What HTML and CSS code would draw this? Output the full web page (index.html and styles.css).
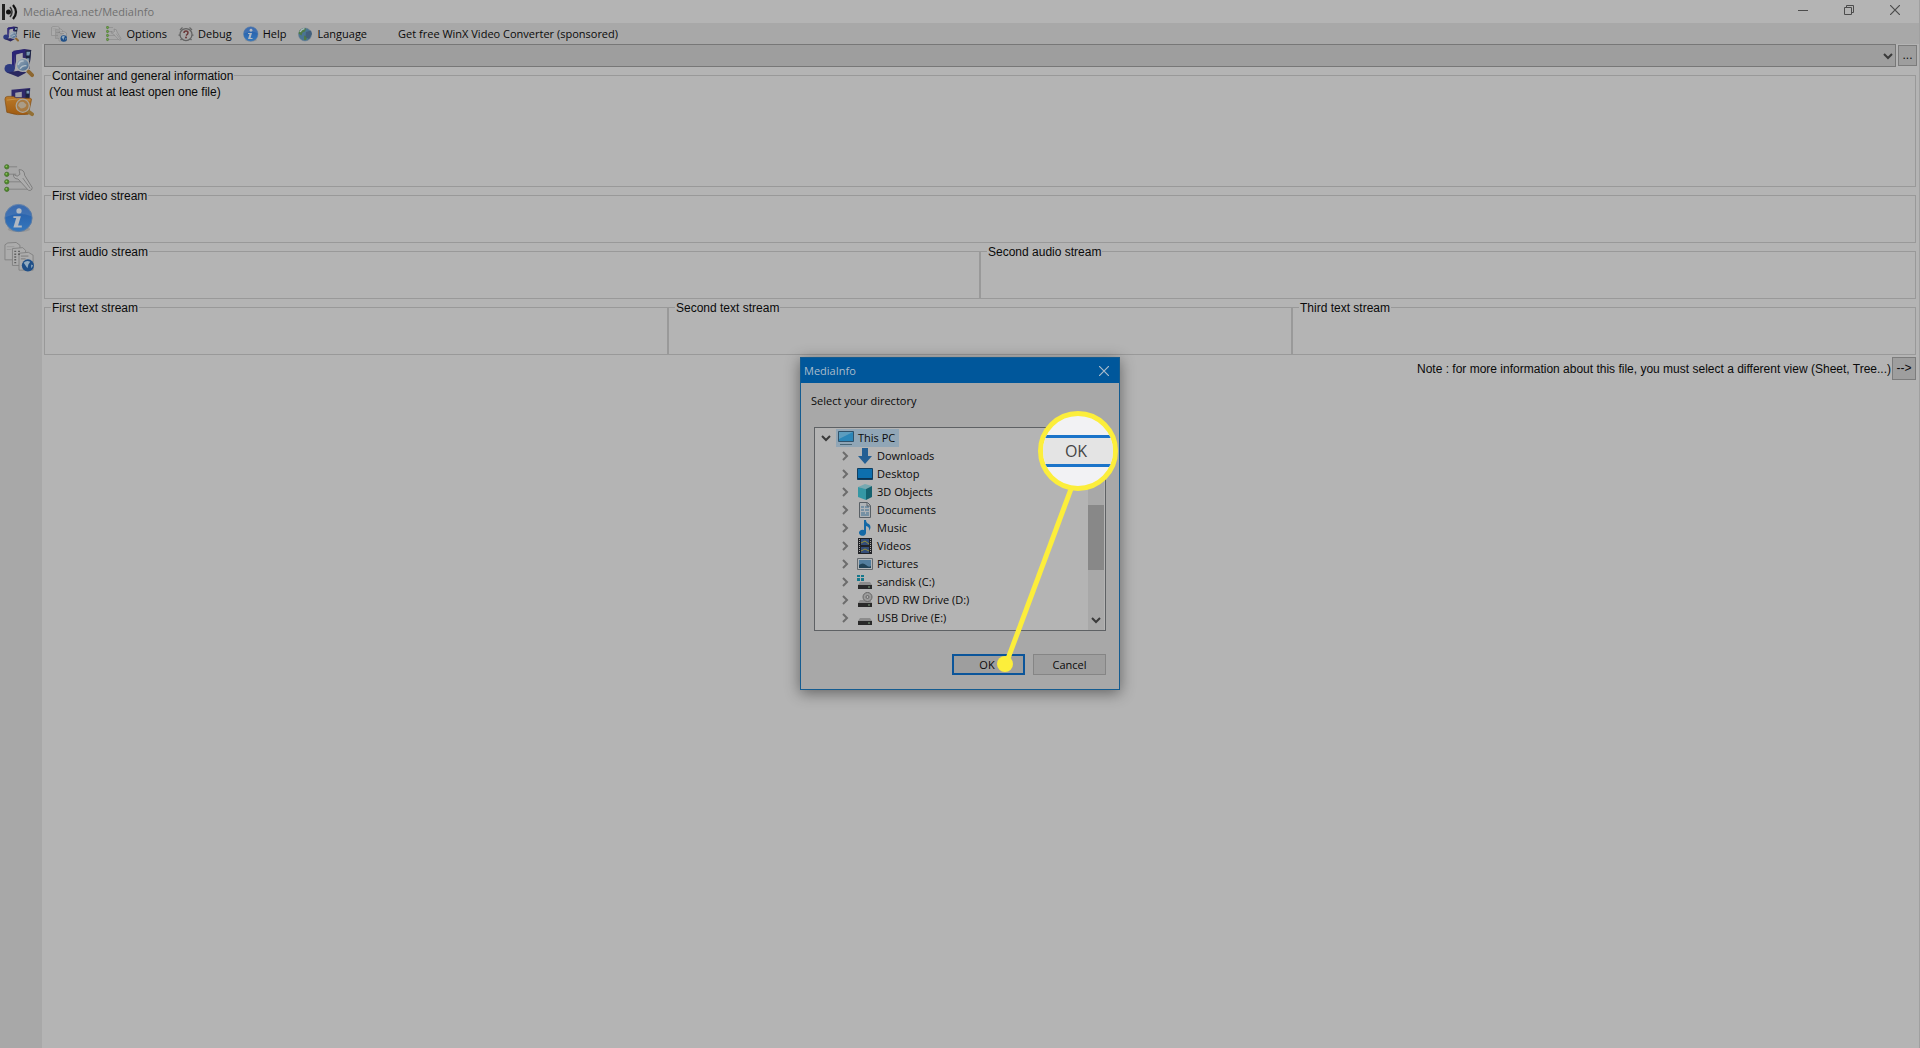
FILE: index.html
```html
<!DOCTYPE html>
<html lang="en">
<head>
<meta charset="utf-8">
<title>MediaArea.net/MediaInfo</title>
<link rel="stylesheet" href="styles.css">
</head>
<body>
<svg class="defs" aria-hidden="true">
  <defs>
    <linearGradient id="glass" x1="0" y1="0" x2="1" y2="1"><stop offset="0" stop-color="#a3b0bb"/><stop offset="1" stop-color="#3f648c"/></linearGradient>
    <linearGradient id="blue" x1="0" y1="0" x2="0" y2="1"><stop offset="0" stop-color="#2459a6"/><stop offset="1" stop-color="#3578bd"/></linearGradient>
    <linearGradient id="orange" x1="0" y1="0" x2="0" y2="1"><stop offset="0" stop-color="#b97a2a"/><stop offset="1" stop-color="#a15c12"/></linearGradient>
    <symbol id="chev" viewBox="0 0 8 10"><path d="M2 1l4 4-4 4" fill="none" stroke="#6c6c6c" stroke-width="2"/></symbol>
    <symbol id="down" viewBox="0 0 10 8"><path d="M1 2l4 4 4-4" fill="none" stroke="#3a3a3a" stroke-width="2"/></symbol>
    <symbol id="cross" viewBox="0 0 10 10"><path d="M0 0l10 10M10 0L0 10" fill="none" stroke="currentColor" stroke-width="1.2"/></symbol>
    <symbol id="file" viewBox="0 0 32 32">
      <path d="M10 3l12-2 7 1-2 20-10 5V7l-4 1v14z" fill="#302a6b"/>
      <path d="M13 7l7-2v17l-7 3z" fill="#a9a9ad"/>
      <path d="M23 3l6-1-2 20-3 1z" fill="#1d2440"/><path d="M24 4h4l-1 4h-3zM24 11h3v3h-3z" fill="#7796b0"/>
      <path d="M10 4v18M10 5l12-2" stroke="#2b2477" stroke-width="3"/>
      <ellipse cx="6" cy="22" rx="5.500" ry="5" fill="#2d3a80"/><path d="M3 26l12 5 9-5-7-2z" fill="#2a2860"/>
      <path d="M26 25l4 4" stroke="#8d6730" stroke-width="4" stroke-linecap="round"/>
      <circle cx="20" cy="18" r="7" fill="url(#glass)" stroke="#adadad" stroke-width="1.400"/>
      <path d="M15 18q2-5 6-4M17 22q3-4 7-3" stroke="#b4c0ca" stroke-width="1.500" fill="none"/>
    </symbol>
    <symbol id="folder" viewBox="0 0 32 32">
      <path d="M8 3l20-2-1 14H8z" fill="#302a6b"/><path d="M12 6l7-1v6h-7z" fill="#a1a1a6"/><path d="M23 3l4-1v12h-4z" fill="#1b2340"/><path d="M24 4h3v3h-3z" fill="#7796b0"/>
      <path d="M1 13q0-3 3-3h6l3 2h15q2 0 1 3l-3 14q-12 2-23-2z" fill="url(#orange)" stroke="#7e4b12" stroke-width=".7"/>
      <path d="M3 14q13-3 25 0" stroke="#c6934a" fill="none"/>
      <path d="M26 26l4 3" stroke="#937035" stroke-width="4" stroke-linecap="round"/>
      <circle cx="20" cy="20" r="7" fill="#a87a42" stroke="#aaa59a" stroke-width="1.400"/><path d="M15 20q1-5 6-4l3 3q-1 4-6 4z" fill="#aa9d88"/>
    </symbol>
    <symbol id="options" viewBox="0 0 32 32">
      <path d="M6 3h8M6 11h7M6 19h12M6 27h24" stroke="#8f8f8f" stroke-width="1.500"/>
      <g fill="#4b8a27" stroke="#4a7330"><circle cx="3" cy="3" r="2.300"/><circle cx="3" cy="11" r="2.300"/><circle cx="3" cy="19" r="2.300"/><circle cx="3" cy="27" r="2.300"/></g>
      <g fill="#8fbf61"><circle cx="2.500" cy="2.500" r="1"/><circle cx="2.500" cy="10.500" r="1"/><circle cx="2.500" cy="18.500" r="1"/><circle cx="2.500" cy="26.500" r="1"/></g>
      <path d="M10 11l4 2 3-2-1-5q6 0 6 6l8 13q0 4-4 3L15 16q-5 0-5-5z" fill="#adadad" stroke="#7b7b7b"/>
      <path d="M20 15l8 11" stroke="#7f7f7f"/>
    </symbol>
    <symbol id="info" viewBox="0 0 32 32">
      <ellipse cx="16" cy="28" rx="12" ry="3" fill="#888" opacity=".6"/>
      <circle cx="15.500" cy="16" r="14.500" fill="url(#blue)" stroke="#5c7ca3"/>
      <path d="M2 15a13.500 13.500 0 0 1 27-1q-13-5-27 1z" fill="#7f9dc4" opacity=".25"/>
      <g fill="#b0b8c2"><circle cx="16" cy="8.500" r="2.800"/><path d="M10 14h8l-3 10h4v2h-9l3-10h-3z"/></g>
    </symbol>
    <symbol id="sheets" viewBox="0 0 32 32">
      <g fill="#acacac" stroke="#818181"><path d="M1 3l3-2 9-.5 4 3V19H1z"/><path d="M9 7l11-1 3 3v16H9z"/><path d="M16 12l10-1 5 3v16H16z"/></g>
      <path d="M11 10h2M11 13h2M11 16h2M11 19h2M11 22h2M15 10h2M15 13h2" stroke="#606060" stroke-width="1.500"/>
      <path d="M18 15h8M18 18h5" stroke="#777"/><path d="M3 5h8M3 8h5" stroke="#999"/>
      <circle cx="25.500" cy="25" r="6.500" fill="#1f4f88"/><path d="M21 22q3-3 7-1l-2 3-1 4-2-3zM29 24l2 1-2 3z" fill="#91abc0"/>
    </symbol>
    <symbol id="debug" viewBox="0 0 32 32">
      <circle cx="16" cy="17" r="12" fill="#a5a5a5" stroke="#636363" stroke-width="2.500"/>
      <path d="M4 8l5-5M28 8l-5-5M1 18h3M28 18h3M5 28l3-3M27 28l-3-3" stroke="#666" stroke-width="2.500"/>
      <path d="M12 14q0-4 4-4t4 4q0 2-4 5" fill="none" stroke="#6b3838" stroke-width="3"/><circle cx="16" cy="23" r="2" fill="#6b3838"/>
    </symbol>
    <symbol id="globe" viewBox="0 0 32 32">
      <circle cx="16" cy="17" r="13" fill="#4a7593" stroke="#6a7f8d"/><path d="M5 9q6-6 13-4l-2 6-5 2-2 6-6-4zM14 19l7 2-3 7h-4z" fill="#4f7b48"/>
      <path d="M18 12l10-3 2 7-6 10-7-4z" fill="#425f7c"/><path d="M6 12q3-6 9-7" stroke="#a8b8bd" stroke-width="3" fill="none"/>
    </symbol>
    <symbol id="drive" viewBox="0 0 16 16"><path d="M3 8h10l2 3H1z" fill="#8c8c8c"/><path d="M1 11h14v4H1z" fill="#292929"/><path d="M11 13h2" stroke="#80a080"/></symbol>
  </defs>
</svg>

<div class="window">
  <header class="titlebar">
    <svg class="logo" viewBox="0 0 16 18"><path d="M1.500 1v16" stroke="#222" stroke-width="3"/><circle cx="6.500" cy="9" r="2.500" fill="#111"/><path d="M8 4q4 5 0 10" fill="none" stroke="#333" stroke-width="1.500"/><path d="M11 2q6 7 0 14" fill="none" stroke="#111" stroke-width="2.200"/></svg>
    <h1>MediaArea.net/MediaInfo</h1>
    <div class="controls">
      <button type="button" aria-label="Minimize"><svg viewBox="0 0 10 10"><path d="M0 5.500h10" stroke="currentColor"/></svg></button>
      <button type="button" aria-label="Restore"><svg viewBox="0 0 10 10"><path d="M.5 2.500h7v7h-7zM2.500 2.500v-2h7v7h-2" fill="none" stroke="currentColor"/></svg></button>
      <button type="button" aria-label="Close"><svg><use href="#cross"/></svg></button>
    </div>
  </header>

  <nav class="menubar">
    <button type="button"><svg><use href="#file"/></svg>File</button>
    <button type="button"><svg><use href="#sheets"/></svg>View</button>
    <button type="button"><svg><use href="#options"/></svg>Options</button>
    <button type="button"><svg><use href="#debug"/></svg>Debug</button>
    <button type="button"><svg><use href="#info"/></svg>Help</button>
    <button type="button"><svg><use href="#globe"/></svg>Language</button>
    <a class="sponsor" href="#">Get free WinX Video Converter (sponsored)</a>
  </nav>

  <div class="workspace">
    <aside class="toolbar">
      <button type="button" aria-label="Open file"><svg><use href="#file"/></svg></button>
      <button type="button" aria-label="Open folder"><svg><use href="#folder"/></svg></button>
      <button type="button" class="after-space" aria-label="Options"><svg><use href="#options"/></svg></button>
      <button type="button" aria-label="About"><svg><use href="#info"/></svg></button>
      <button type="button" aria-label="View"><svg><use href="#sheets"/></svg></button>
    </aside>

    <main class="content">
      <div class="path">
        <div class="combo">
          <select aria-label="Current file"><option></option></select>
          <svg><use href="#down"/></svg>
        </div>
        <button type="button" class="browse">...</button>
      </div>

      <div class="streams"><fieldset class="general"><legend>Container and general information</legend><p>(You must at least open one file)</p></fieldset></div>
      <div class="streams"><fieldset><legend>First video stream</legend></fieldset></div>
      <div class="streams"><fieldset><legend>First audio stream</legend></fieldset><fieldset><legend>Second audio stream</legend></fieldset></div>
      <div class="streams"><fieldset><legend>First text stream</legend></fieldset><fieldset><legend>Second text stream</legend></fieldset><fieldset><legend>Third text stream</legend></fieldset></div>
      <div class="note">
        <span>Note : for more information about this file, you must select a different view (Sheet, Tree...)</span>
        <button type="button">--&gt;</button>
      </div>
    </main>
  </div>
</div>

<div class="overlay">
  <section class="dialog" role="dialog" aria-labelledby="dialog-title">
    <header class="dialog-title">
      <h2 id="dialog-title">MediaInfo</h2>
      <button type="button" aria-label="Close dialog"><svg><use href="#cross"/></svg></button>
    </header>
    <div class="dialog-body">
      <p>Select your directory</p>
      <div class="tree">
        <ul>
          <li class="root">
            <svg class="open"><use href="#down"/></svg>
            <span class="selected"><svg viewBox="0 0 16 16"><path d="M.5 1.500h15v10H.5z" fill="#2b86b8" stroke="#31526a"/><path d="M1 2h14L1 9z" fill="#5c9dbf"/><path d="M2 14.500h12" stroke="#4a6675"/></svg>This PC</span>
          </li>
          <li><svg class="arrow"><use href="#chev"/></svg><svg viewBox="0 0 16 16"><path d="M5 0h6v8h4l-7 8-7-8h4z" fill="#245f94"/></svg>Downloads</li>
          <li><svg class="arrow"><use href="#chev"/></svg><svg viewBox="0 0 16 16"><path d="M.5 2.500h15v11H.5z" fill="#0d6fae" stroke="#123f60"/><path d="M1 12.500h14" stroke="#0c3452"/></svg>Desktop</li>
          <li><svg class="arrow"><use href="#chev"/></svg><svg viewBox="0 0 16 16"><path d="M1 3l7-3 7 2-6 3z" fill="#76a9b1"/><path d="M1 3l8 2v11l-8-3z" fill="#3597a4"/><path d="M9 5l6-3v11l-6 3z" fill="#15626f"/></svg>3D Objects</li>
          <li><svg class="arrow"><use href="#chev"/></svg><svg viewBox="0 0 16 16"><path d="M2.500.5h8l3 3v12h-11z" fill="#b0b4b7" stroke="#596066"/><path d="M4 5h3M8 5h4M4 8h3M8 8h4M4 11h4M9 11h3M4 13h8" stroke="#3c6f91"/><path d="M10 1v3h3" fill="none" stroke="#596066"/></svg>Documents</li>
          <li><svg class="arrow"><use href="#chev"/></svg><svg viewBox="0 0 16 16"><path d="M7 0h2q0 3 3 4 3 3 0 7 1-4-3-5v7a3.500 3 0 1 1-2-3z" fill="#1569a6"/></svg>Music</li>
          <li><svg class="arrow"><use href="#chev"/></svg><svg viewBox="0 0 16 16"><path d="M1 0h14v16H1z" fill="#202226"/><path d="M4 1h8v6H4zM4 9h8v6H4z" fill="#334d79"/><path d="M4 5l4-2 4 3M4 13l4-2 4 2" stroke="#93903a" fill="none"/><path d="M2.500 1v14M13.500 1v14" stroke="#aaa" stroke-dasharray="1 1"/></svg>Videos</li>
          <li><svg class="arrow"><use href="#chev"/></svg><svg viewBox="0 0 16 16"><path d="M.5 2.500h15v11H.5z" fill="#b1b5b8" stroke="#646a6e"/><path d="M2 4h12v8H2z" fill="#537e9e"/><path d="M2 9q4-3 7 0t5 1v2H2z" fill="#214357"/></svg>Pictures</li>
          <li><svg class="arrow"><use href="#chev"/></svg><svg viewBox="0 0 16 16"><use href="#drive"/><path d="M0 1h3v2H0zM4 1h3v2H4zM0 4h3v3H0zM4 4h3v3H4z" fill="#16788c"/></svg>sandisk (C:)</li>
          <li><svg class="arrow"><use href="#chev"/></svg><svg viewBox="0 0 16 16"><use href="#drive"/><circle cx="10.500" cy="5" r="4.500" fill="#9b9b9b" stroke="#666"/><circle cx="10.500" cy="5" r="1.500" fill="#b4b4b4" stroke="#666"/></svg>DVD RW Drive (D:)</li>
          <li><svg class="arrow"><use href="#chev"/></svg><svg viewBox="0 0 16 16"><use href="#drive"/></svg>USB Drive (E:)</li>
        </ul>
        <div class="scrollbar"><div class="thumb"></div><svg><use href="#down"/></svg></div>
      </div>
      <div class="actions"><button type="button" class="default">OK</button><button type="button">Cancel</button></div>
    </div>
    <svg class="pointer" viewBox="0 0 320 333" aria-hidden="true">
      <path d="M271 132L206 307" stroke="#fcee3b" stroke-width="5"/>
      <circle cx="205" cy="307" r="8" fill="#fcee3b"/>
    </svg>
    <div class="magnifier"><span>OK</span></div>
  </section>
</div>
</body>
</html>
```

FILE: styles.css
```css
* { box-sizing: border-box; }

body {
  margin: 0;
  background: #b4b4b4;
  color: #0a0a0a;
  font: 11px/16px "Open Sans", "Noto Sans", sans-serif;
}

button {
  margin: 0;
  padding: 0;
  border: 0;
  background: none;
  color: inherit;
  font: inherit;
}

h1, h2, p, ul { margin: 0; padding: 0; font: inherit; }
svg { display: block; flex: none; }
.defs { position: absolute; width: 0; height: 0; }

.window {
  display: flex;
  flex-direction: column;
  min-height: 100vh;
  border-right: 1px solid #a0a0a0;
}

/* Title bar */
.titlebar {
  display: flex;
  align-items: center;
  gap: 5px;
  height: 23px;
  padding-left: 2px;
  color: #707070;
}
.logo { width: 16px; height: 18px; }
.controls {
  display: flex;
  align-items: center;
  margin-left: auto;
  padding-right: 1px;
  color: #4c4c4c;
}
.controls button {
  display: flex;
  justify-content: center;
  width: 46px;
  padding-bottom: 3px;
}
.controls svg { width: 10px; height: 10px; }

/* Menu */
.menubar {
  display: flex;
  align-items: center;
  gap: 11px;
  height: 21px;
  padding-left: 3px;
  background: #a8a8a8;
}
.menubar button { display: flex; align-items: center; gap: 4px; }
.menubar svg { width: 16px; height: 16px; }
.sponsor { margin-left: 20px; color: inherit; text-decoration: none; }

.workspace { display: flex; flex: 1; }
.toolbar {
  display: flex;
  flex-direction: column;
  align-items: center;
  gap: 7px;
  width: 42px;
  padding: 3px 4px 0 0;
  background: #a8a8a8;
}
.toolbar svg { width: 30px; height: 32px; }
.toolbar .after-space { margin-top: 38px; }

/* Content */
.content {
  flex: 1;
  padding: 0 2px;
  font: 12px/15px "Liberation Sans", Arial, sans-serif;
}
.path { display: flex; align-items: flex-start; gap: 2px; height: 24px; }
.combo { display: grid; flex: 1; align-items: center; }
.combo select, .combo svg { grid-area: 1 / 1; }
.combo select {
  appearance: none;
  width: 100%;
  height: 23px;
  border: 1px solid #777;
  border-radius: 0;
  background: #9e9e9e;
}
.combo svg { justify-self: end; width: 10px; height: 8px; margin-right: 3px; }
.browse, .note button { border: 1px solid #7c7c7c; background: #9e9e9e; }
.browse { width: 19px; height: 21px; margin-top: 1px; }

.streams { display: flex; margin: 0 1px 1px 0; }
fieldset {
  flex: 1;
  min-width: 0;
  height: 55px;
  margin: 0;
  padding: 0 4px;
  border: 1px solid #999;
}
legend { margin-left: 2px; padding: 2px 1px 0; line-height: 13px; }
.general { height: 119px; }
.general p { padding-top: 2px; }
.note { display: flex; align-items: center; justify-content: flex-end; gap: 1px; padding: 1px 1px 0 0; }
.note span { padding-top: 2px; }
.note button { width: 24px; height: 23px; }

/* Directory dialog */
.overlay {
  position: absolute;
  inset: 0;
  display: grid;
  place-items: center;
  padding-bottom: 1px;
}
.dialog {
  position: relative;
  width: 320px;
  border: 1px solid #155c90;
  background: #a8a8a8;
  box-shadow: 0 3px 14px rgba(0, 0, 0, .45);
}
.dialog-title {
  display: flex;
  align-items: center;
  justify-content: space-between;
  height: 25px;
  padding: 0 10px 0 3px;
  background: #00579b;
  color: #a9bccb;
}
.dialog-title svg { width: 10px; height: 10px; }
.dialog-body { padding: 10px 13px 14px; }
.dialog-body p { margin-left: -3px; }
.tree {
  display: flex;
  justify-content: space-between;
  height: 204px;
  margin-top: 18px;
  border: 1px solid #5e6164;
  background: #b4b4b4;
}
.tree ul { padding-top: 1px; list-style: none; }
.tree li {
  display: flex;
  align-items: center;
  gap: 4px;
  height: 18px;
  padding-left: 26px;
}
.tree li svg { width: 16px; height: 16px; }
.tree li .arrow { width: 8px; height: 10px; margin-right: 4px; }
.tree .root { gap: 8px; padding-left: 6px; }
.tree .root .open { width: 10px; height: 8px; }
.selected {
  display: flex;
  align-items: center;
  gap: 4px;
  height: 18px;
  margin-left: -3px;
  padding: 0 4px 0 2px;
  background: #91a6b6;
}
.scrollbar {
  display: flex;
  flex-direction: column;
  align-items: center;
  justify-content: flex-end;
  gap: 46px;
  width: 16px;
  margin-right: 1px;
  padding-bottom: 6px;
  background: #a8a8a8;
}
.thumb { width: 16px; height: 65px; background: #888; }
.scrollbar svg { width: 10px; height: 8px; }
.actions { display: flex; justify-content: flex-end; gap: 8px; margin-top: 23px; }
.actions button { width: 73px; height: 21px; border: 1px solid #858585; background: #9e9e9e; }
.actions .default { border: 2px solid #0b559a; padding-right: 3px; }

/* Click callout */
.pointer { position: absolute; left: -1px; top: -1px; width: 320px; height: 333px; }
.magnifier {
  position: absolute;
  left: 237px;
  top: 53px;
  display: grid;
  align-items: center;
  width: 80px;
  height: 80px;
  overflow: hidden;
  border: 5px solid #fcee3b;
  border-radius: 50%;
  background: #f2f2f4;
}
.magnifier span {
  height: 32px;
  padding-right: 4px;
  border: solid #1b74c9;
  border-width: 3px 0;
  background: #e4e4e4;
  color: #444;
  font-size: 16px;
  font-weight: 500;
  line-height: 26px;
  text-align: center;
}
```
